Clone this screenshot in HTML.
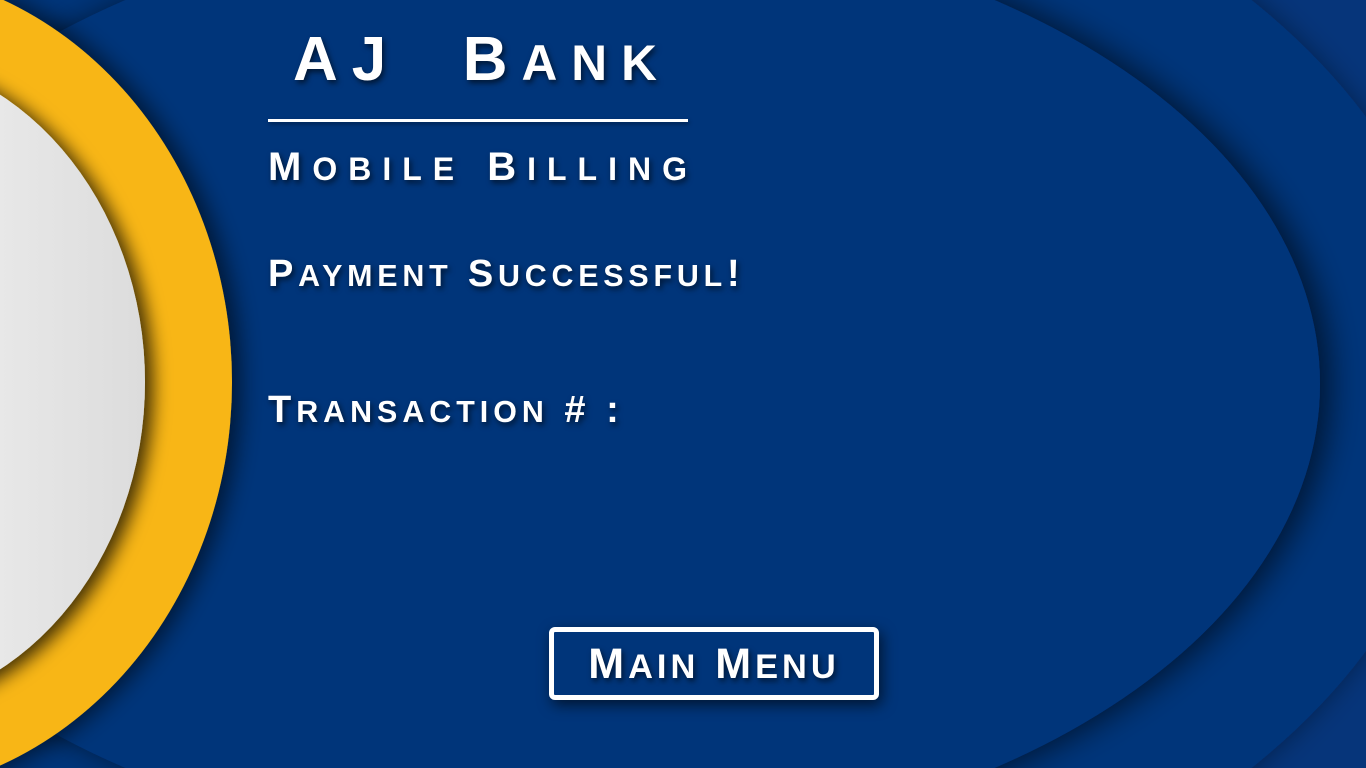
<!DOCTYPE html>
<html><head><meta charset="utf-8"><style>
html,body{margin:0;padding:0;width:1366px;height:768px;overflow:hidden}
body{background:#06357a;font-family:"Liberation Sans",sans-serif;font-weight:bold;color:#fff;position:relative}
svg{position:absolute;left:0;top:0}
.t{position:absolute;white-space:nowrap;text-shadow:2px 3px 6px rgba(0,0,0,.6)}
.s{font-size:0.8em}
</style></head><body>
<svg width="1366" height="768" viewBox="0 0 1366 768">
<defs>
<filter id="f1" x="-20%" y="-20%" width="140%" height="140%"><feDropShadow dx="-8" dy="0" stdDeviation="16" flood-color="#000" flood-opacity="0.55"/></filter>
<filter id="f2" x="-20%" y="-20%" width="140%" height="140%"><feDropShadow dx="10" dy="0" stdDeviation="16" flood-color="#000" flood-opacity="0.6"/></filter>
<filter id="f3" x="-20%" y="-20%" width="140%" height="140%"><feDropShadow dx="8" dy="0" stdDeviation="12" flood-color="#000" flood-opacity="0.6"/></filter>
<filter id="f4" x="-20%" y="-20%" width="140%" height="140%"><feDropShadow dx="8" dy="4" stdDeviation="9" flood-color="#000" flood-opacity="0.75"/></filter>
<linearGradient id="g" x1="0" x2="1" y1="0" y2="0"><stop offset="0.5" stop-color="#f3f3f3"/><stop offset="1" stop-color="#dcdcdc"/></linearGradient>
</defs>
<rect width="1366" height="768" fill="#06357a"/>
<ellipse cx="560" cy="384" rx="900" ry="600" fill="#06357a" filter="url(#f1)"/>
<ellipse cx="560" cy="384" rx="760" ry="468" fill="#06357a" filter="url(#f2)"/>
<ellipse cx="-140" cy="382" rx="372" ry="414" fill="#f8b615" filter="url(#f3)"/>
<ellipse cx="-140" cy="382" rx="285" ry="330" fill="url(#g)" filter="url(#f4)"/>
</svg>

<div class="t" style="left:293px;top:24px;font-size:62px;letter-spacing:14px">AJ&nbsp; B<span class="s">ANK</span></div>
<div style="position:absolute;left:268px;top:119px;width:420px;height:3px;background:#fff;box-shadow:1px 2px 4px rgba(0,0,0,.4)"></div>
<div class="t" style="left:268px;top:145px;font-size:40px;letter-spacing:11px">M<span class="s">OBILE</span> B<span class="s">ILLING</span></div>
<div class="t" style="left:268px;top:253px;font-size:38px;letter-spacing:4.8px">P<span class="s">AYMENT</span> S<span class="s">UCCESSFUL</span>!</div>
<div class="t" style="left:268px;top:389px;font-size:38px;letter-spacing:5px">T<span class="s">RANSACTION</span> # :</div>

<div style="position:absolute;left:549px;top:627px;width:320px;height:63px;border:5px solid #fff;border-radius:6px;box-shadow:3px 5px 14px rgba(0,0,0,.6)"></div>
<div class="t" style="left:549px;top:640px;width:330px;text-align:center;font-size:43px;letter-spacing:4px">M<span class="s">AIN</span> M<span class="s">ENU</span></div>
</body></html>
